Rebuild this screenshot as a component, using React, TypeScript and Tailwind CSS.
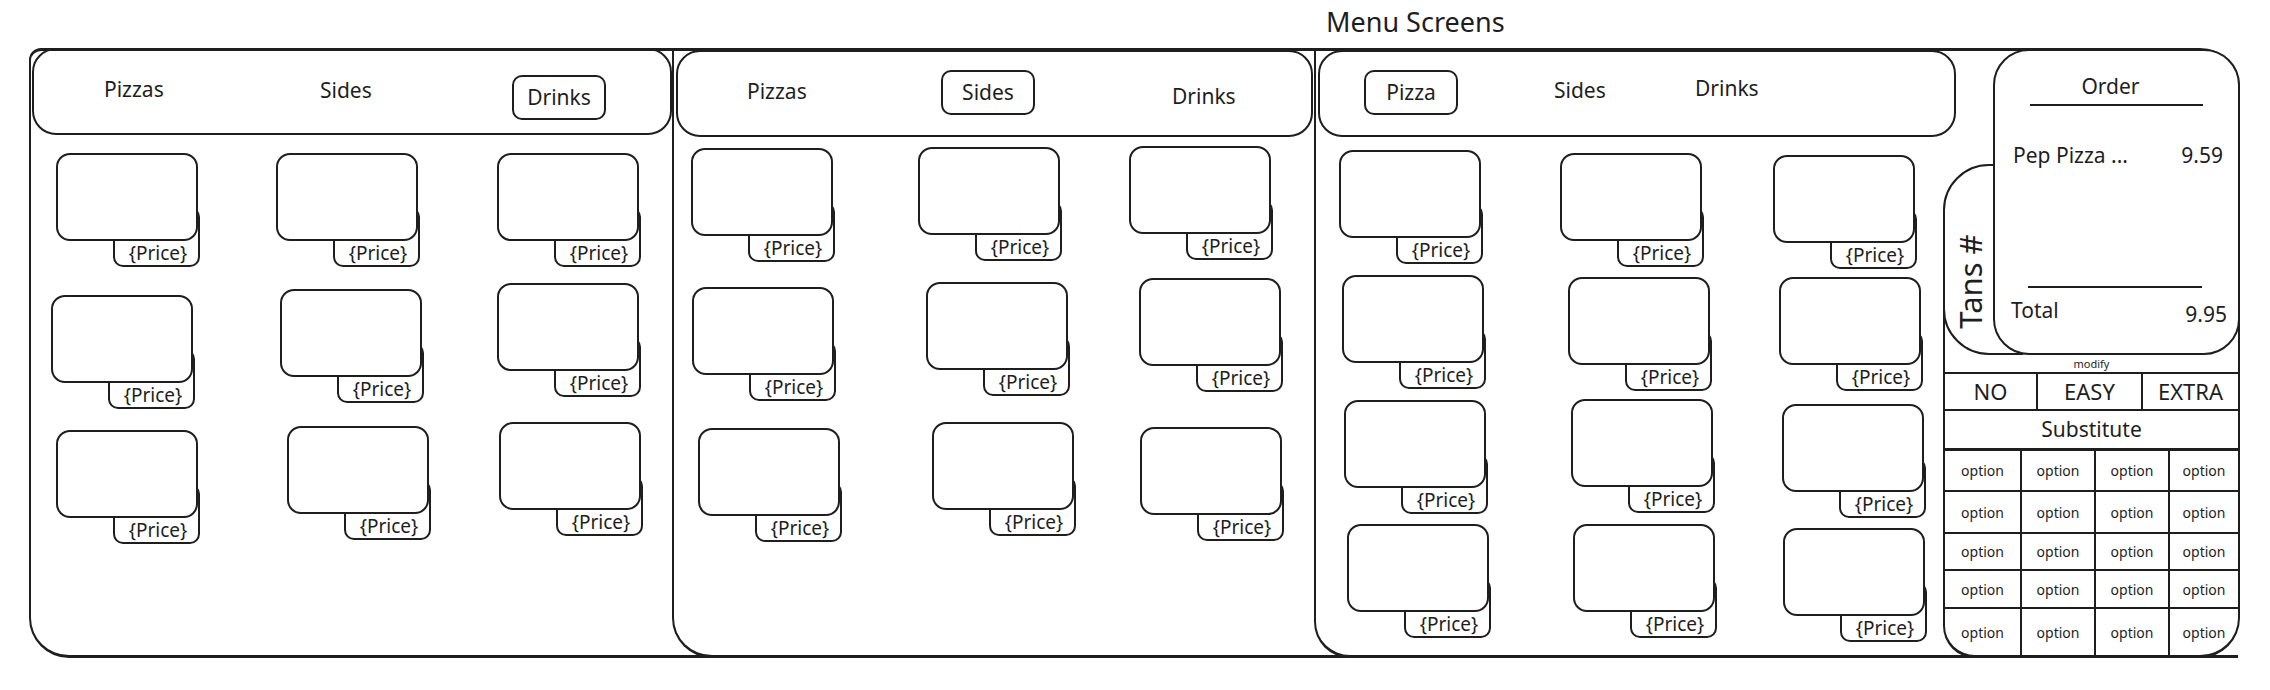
import React from "react";

const Card = ({ cls }: { cls: string }) => (
  <div className={`relative w-[142px] h-[88px] ${cls}`}>
    <div className="absolute right-[-2px] bottom-[-26px] w-[87px] h-[60px] border-2 border-[#1e1e1e] rounded-[10px] flex items-end justify-center">
      <span className="text-[19px] leading-[24px] pl-[3px]">{"{Price}"}</span>
    </div>
    <div className="absolute inset-0 border-2 border-[#1e1e1e] rounded-[14px] bg-white" />
  </div>
);

const panelOne = [
  "ml-[25px] mt-[18px]",
  "ml-[25px] mt-[18px]",
  "ml-[26px] mt-[18px]",
  "ml-[20px] mt-[20px]",
  "ml-[29px] mt-[14px]",
  "ml-[26px] mt-[8px]",
  "ml-[25px] mt-[15px]",
  "ml-[36px] mt-[11px]",
  "ml-[28px] mt-[7px]",
];

const panelTwo = [
  "ml-[17px] mt-[11px]",
  "ml-[24px] mt-[10px]",
  "ml-[15px] mt-[9px]",
  "ml-[18px] mt-[10px]",
  "ml-[32px] mt-[5px]",
  "ml-[25px] mt-[1px]",
  "ml-[24px] mt-[11px]",
  "ml-[38px] mt-[5px]",
  "ml-[26px] mt-[10px]",
];

const panelThree = [
  "ml-[23px] mt-[13px]",
  "ml-[24px] mt-[16px]",
  "ml-[27px] mt-[18px]",
  "ml-[26px] mt-[13px]",
  "ml-[32px] mt-[15px]",
  "ml-[33px] mt-[15px]",
  "ml-[28px] mt-[13px]",
  "ml-[35px] mt-[12px]",
  "ml-[36px] mt-[17px]",
  "ml-[31px] mt-[12px]",
  "ml-[37px] mt-[12px]",
  "ml-[37px] mt-[16px]",
];

const optionRows = ["h-[42px]", "h-[42px]", "h-[37px]", "h-[38px]", "flex-1"];

const OptionRow = ({ h, first }: { h: string; first: boolean }) => (
  <div
    className={`flex ${h} ${first ? "border-t-[3px]" : "border-t-2"} border-[#1e1e1e] text-[14px]`}
  >
    <div className="w-[75px] flex items-center justify-center">option</div>
    <div className="w-[74px] border-l-2 border-[#1e1e1e] flex items-center justify-center">option</div>
    <div className="w-[74px] border-l-2 border-[#1e1e1e] flex items-center justify-center">option</div>
    <div className="flex-1 border-l-2 border-[#1e1e1e] flex items-center justify-center">option</div>
  </div>
);

export default function App() {
  return (
    <div className="w-[2270px] h-[690px] bg-white text-[#1e1e1e] font-['Noto_Sans',sans-serif] overflow-hidden">
      <div className="h-[48px] flex items-center pl-[1326px] pb-[4px] text-[27px]">Menu Screens</div>

      <div className="ml-[29px] w-[2211px] h-[610px] border-x-2 border-y-[3px] border-[#1e1e1e] rounded-tl-[12px] rounded-bl-[40px] rounded-tr-[40px] rounded-br-[40px] flex">
        {/* screen 1 */}
        <div className="w-[641px] shrink-0 flex flex-col">
          <div className="-mt-[3px] ml-[1px] w-[640px] h-[87px] border-2 border-[#1e1e1e] rounded-[24px] flex items-center text-[21px]">
            <span className="ml-[70px] w-[216px] -mt-[3px]">Pizzas</span>
            <span className="w-[192px] -mt-[1px]">Sides</span>
            <span className="w-[94px] h-[45px] mt-[12px] border-2 border-[#1e1e1e] rounded-[10px] flex items-center justify-center">
              Drinks
            </span>
          </div>
          <div className="grid grid-cols-[220px_220px_201px] grid-rows-[140px_140px_140px]">
            {panelOne.map((c, i) => (
              <Card key={i} cls={c} />
            ))}
          </div>
        </div>

        {/* screen 2 */}
        <div className="w-[642px] shrink-0 flex flex-col border-l-2 border-b-[3px] -mb-[3px] border-[#1e1e1e] rounded-bl-[40px]">
          <div className="-mt-[1px] ml-[2px] w-[637px] h-[87px] border-2 border-[#1e1e1e] rounded-[24px] flex items-center text-[21px]">
            <span className="ml-[69px] w-[194px] -mt-[3px]">Pizzas</span>
            <span className="w-[94px] h-[45px] -mt-[2px] border-2 border-[#1e1e1e] rounded-[10px] flex items-center justify-center">
              Sides
            </span>
            <span className="ml-[137px] mt-[7px]">Drinks</span>
          </div>
          <div className="grid grid-cols-[220px_220px_200px] grid-rows-[140px_140px_140px]">
            {panelTwo.map((c, i) => (
              <Card key={i} cls={c} />
            ))}
          </div>
        </div>

        {/* screen 3 */}
        <div className="w-[629px] shrink-0 flex flex-col border-l-2 border-b-[3px] -mb-[3px] border-[#1e1e1e] rounded-bl-[36px]">
          <div className="-mt-[1px] ml-[2px] w-[638px] h-[87px] border-2 border-[#1e1e1e] rounded-[24px] flex items-center text-[21px]">
            <span className="ml-[44px] w-[94px] h-[45px] -mt-[2px] border-2 border-[#1e1e1e] rounded-[10px] flex items-center justify-center">
              Pizza
            </span>
            <span className="ml-[96px] w-[141px] -mt-[5px]">Sides</span>
            <span className="-mt-[9px]">Drinks</span>
          </div>
          <div className="grid grid-cols-[220px_210px_197px] grid-rows-[125px_125px_125px_125px]">
            {panelThree.map((c, i) => (
              <Card key={i} cls={c} />
            ))}
          </div>
        </div>

        {/* order column */}
        <div className="w-[295px] shrink-0 flex flex-col">
          <div className="h-[304px] shrink-0 flex">
            <div className="mt-[113px] w-[80px] h-[191px] shrink-0 border-2 border-[#1e1e1e] rounded-l-[46px] flex">
              <div className="w-[50px] flex items-center justify-center pt-[44px]">
                <span className="-rotate-90 whitespace-nowrap text-[31px] leading-none">Tans #</span>
              </div>
            </div>
            <div className="relative z-10 -ml-[30px] -mt-[2px] -mr-[2px] w-[247px] h-[306px] shrink-0 border-2 border-[#1e1e1e] rounded-[36px] bg-white flex flex-col">
              <div className="mt-[22px] pr-[12px] text-center text-[21px] leading-[26px]">Order</div>
              <div className="mt-[5px] mx-[35px] h-[2px] bg-[#1e1e1e]" />
              <div className="mt-[36px] pl-[18px] pr-[15px] flex justify-between text-[21px] leading-[26px]">
                <span>Pep Pizza ...</span>
                <span>9.59</span>
              </div>
              <div className="mt-[118px] ml-[33px] mr-[36px] h-[2px] bg-[#1e1e1e]" />
              <div className="mt-[9px] pl-[16px] pr-[11px] flex justify-between text-[21px] leading-[26px]">
                <span>Total</span>
                <span className="mt-[4px]">9.95</span>
              </div>
            </div>
          </div>

          <div className="flex-1 -mt-[46px] pt-[46px] -mb-[3px] border-l-2 border-b-[3px] border-[#1e1e1e] rounded-bl-[32px] flex flex-col">
            <div className="h-[17px] text-[11px] leading-[17px] text-center">modify</div>
            <div className="h-[37px] border-t-2 border-[#1e1e1e] flex text-[22px]">
              <div className="w-[91px] flex items-center justify-center">NO</div>
              <div className="w-[105px] border-l-2 border-[#1e1e1e] flex items-center justify-center">EASY</div>
              <div className="flex-1 border-l-2 border-[#1e1e1e] flex items-center justify-center">EXTRA</div>
            </div>
            <div className="h-[39px] border-t-2 border-[#1e1e1e] flex items-center justify-center text-[21px]">
              Substitute
            </div>
            {optionRows.map((h, i) => (
              <OptionRow key={i} h={h} first={i === 0} />
            ))}
          </div>
        </div>
      </div>
    </div>
  );
}
